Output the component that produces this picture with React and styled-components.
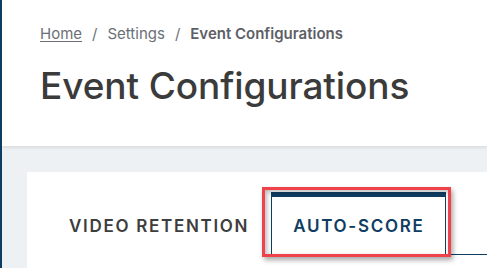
import React from "react";
import styled, { createGlobalStyle } from "styled-components";

const Global = createGlobalStyle`
  html, body { margin: 0; padding: 0; background: #edf1f4; }
  body { font-family: Inter, "Noto Sans", Arial, sans-serif; }
  * { box-sizing: border-box; }
`;

const Page = styled.div`
  height: 268px;
  border-left: 2px solid #0f3d62;
  background: #edf1f4;
  overflow: hidden;
`;

const Header = styled.header`
  background: #ffffff;
  height: 146px;
  padding: 25px 0 0 38px;
  box-shadow: 0 1px 4px rgba(0, 0, 0, 0.12);
  position: relative;
  z-index: 1;
`;

const Crumbs = styled.nav`
  display: flex;
  align-items: center;
  gap: 10px;
  font-size: 15px;
  line-height: 18px;
  color: #6b6f75;
`;

const CrumbLink = styled.a`
  color: #6b6f75;
  text-decoration: underline;
  text-underline-offset: 2px;
`;

const Sep = styled.span`
  color: #6b6f75;
`;

const Current = styled.span`
  font-weight: 600;
  color: #5c6066;
`;

const Title = styled.h1`
  margin: 21px 0 0;
  font-size: 37px;
  line-height: 44px;
  font-weight: 500;
  color: #3b3b3b;
  letter-spacing: -0.1px;
`;

const Main = styled.main`
  padding: 26px 0 0 25px;
`;

const Card = styled.section`
  background: #ffffff;
  padding: 20px 0 0 20px;
  height: 100px;
`;

const TabList = styled.div`
  display: flex;
  border-bottom: 1px solid #0f3d62;
  height: 63px;
`;

const Tab = styled.button`
  position: relative;
  display: flex;
  align-items: center;
  height: 63px;
  margin-bottom: -1px;
  padding: 0 21px;
  border: 1px solid ${(p) => (p.$active ? "#0f3d62" : "transparent")};
  border-top: 5px solid ${(p) => (p.$active ? "#0f3d62" : "transparent")};
  border-bottom: 1px solid ${(p) => (p.$active ? "#ffffff" : "transparent")};
  background: #ffffff;
  font-family: Inter, "Noto Sans", Arial, sans-serif;
  font-size: 17px;
  font-weight: 600;
  letter-spacing: 1.7px;
  color: ${(p) => (p.$active ? "#0f3d62" : "#3d3d3d")};
  cursor: pointer;
`;

const Highlight = styled.span`
  position: absolute;
  left: -10px;
  top: -10px;
  right: -6px;
  bottom: -3px;
  border: 3px solid #f0424a;
  pointer-events: none;
  box-shadow: 2px 3px 5px rgba(0, 0, 0, 0.35), inset 2px 2px 5px rgba(0, 0, 0, 0.28);
`;

export default function App() {
  return (
    <>
      <Global />
      <Page>
        <Header>
          <Crumbs>
            <CrumbLink href="#">Home</CrumbLink>
            <Sep>/</Sep>
            <span>Settings</span>
            <Sep>/</Sep>
            <Current>Event Configurations</Current>
          </Crumbs>
          <Title>Event Configurations</Title>
        </Header>
        <Main>
          <Card>
            <TabList>
              <Tab>VIDEO RETENTION</Tab>
              <Tab $active>
                AUTO-SCORE
                <Highlight />
              </Tab>
            </TabList>
          </Card>
        </Main>
      </Page>
    </>
  );
}
